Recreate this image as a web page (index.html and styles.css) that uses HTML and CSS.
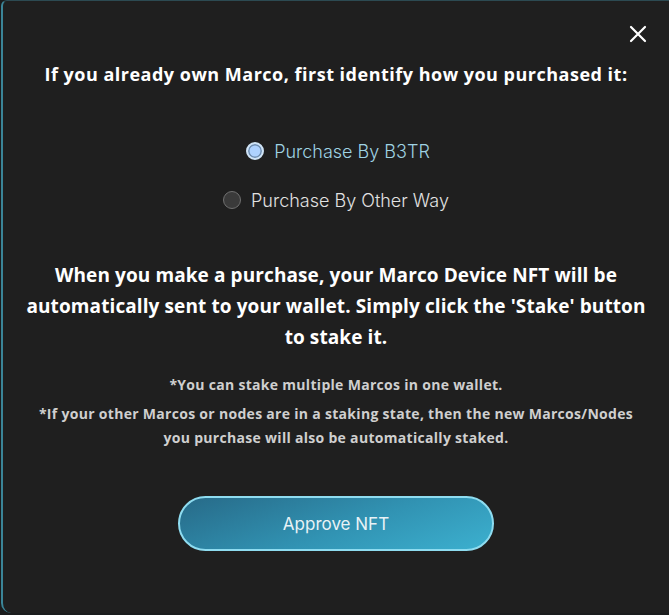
FILE: index.html
```html
<!DOCTYPE html>
<html>
<head>
<meta charset="utf-8">
<link rel="stylesheet" href="styles.css">
</head>
<body>
<div class="modal">
  <button class="close" aria-label="Close">
    <svg width="18" height="18" viewBox="0 0 18 18"><path d="M2 2 L16 16 M16 2 L2 16" stroke="#fff" stroke-width="2.2" stroke-linecap="round"/></svg>
  </button>
  <h2 class="title">If you already own Marco, first identify how you purchased it:</h2>
  <div class="options">
    <label class="option selected"><span class="radio"></span>Purchase By B3TR</label>
    <label class="option"><span class="radio"></span>Purchase By Other Way</label>
  </div>
  <p class="lead">When you make a purchase, your Marco Device NFT will be automatically sent to your wallet. Simply click the 'Stake' button to stake it.</p>
  <p class="note first">*You can stake multiple Marcos in one wallet.</p>
  <p class="note">*If your other Marcos or nodes are in a staking state, then the new Marcos/Nodes you purchase will also be automatically staked.</p>
  <div class="actions">
    <button class="approve">Approve NFT</button>
  </div>
</div>
</body>
</html>
```
FILE: styles.css
```css
html, body {
  margin: 0;
  padding: 0;
  background: #1a1c1d;
}
.modal {
  box-sizing: border-box;
  margin-left: 1px;
  height: 613px;
  background: #1f1f1f;
  border-left: 2px solid #3b8598;
  border-top: 1px solid #2c4a52;
  border-bottom-left-radius: 10px;
  border-top-left-radius: 6px;
  padding: 24px 0 0 0;
  display: flex;
  flex-direction: column;
  align-items: center;
  font-family: "Open Sans", Lato, sans-serif;
  color: #fff;
}
.close {
  align-self: flex-end;
  margin-right: 22px;
  background: none;
  border: none;
  padding: 0;
  width: 18px;
  height: 18px;
  cursor: pointer;
}
.title {
  margin: 19px 0 0 0;
  font-size: 18px;
  font-weight: 700;
  letter-spacing: 0.5px;
  text-align: center;
}
.options {
  margin-top: 55px;
  display: flex;
  flex-direction: column;
  align-items: center;
  gap: 29px;
}
.option {
  display: flex;
  align-items: center;
  gap: 10px;
  font-family: Inter, "Open Sans", sans-serif;
  font-weight: 300;
  font-size: 18px;
  color: #e2e2e2;
  height: 20px;
}
.option.selected {
  color: #9fd3e3;
  transform: translateX(2px);
}
.radio {
  box-sizing: border-box;
  width: 18px;
  height: 18px;
  border-radius: 50%;
  background: #3a3a3a;
  border: 1.5px solid #707070;
}
.option.selected .radio {
  background: #aed2ff;
  border: 2px solid #cfe3f5;
  box-shadow: inset 0 0 0 1.5px #6e8cae;
}
.lead {
  margin: 50px 0 0 0;
  max-width: 632px;
  font-size: 19px;
  font-weight: 700;
  letter-spacing: 0.1px;
  line-height: 31px;
  text-align: center;
}
.note {
  margin: 0;
  max-width: 612px;
  font-size: 14px;
  font-weight: 700;
  letter-spacing: 0.3px;
  line-height: 24px;
  color: #cfcfcf;
  text-align: center;
}
.note.first {
  margin-top: 20px;
  margin-bottom: 5px;
}
.actions {
  margin-top: 46px;
}
.approve {
  width: 316px;
  height: 55px;
  border-radius: 28px;
  border: 2px solid #8edcf0;
  background: linear-gradient(160deg, #276a88 0%, #3193b3 55%, #3cb0cf 100%);
  color: #e8f2f6;
  font-family: Inter, "Open Sans", sans-serif;
  font-size: 17px;
  font-weight: 400;
  cursor: pointer;
}
```
